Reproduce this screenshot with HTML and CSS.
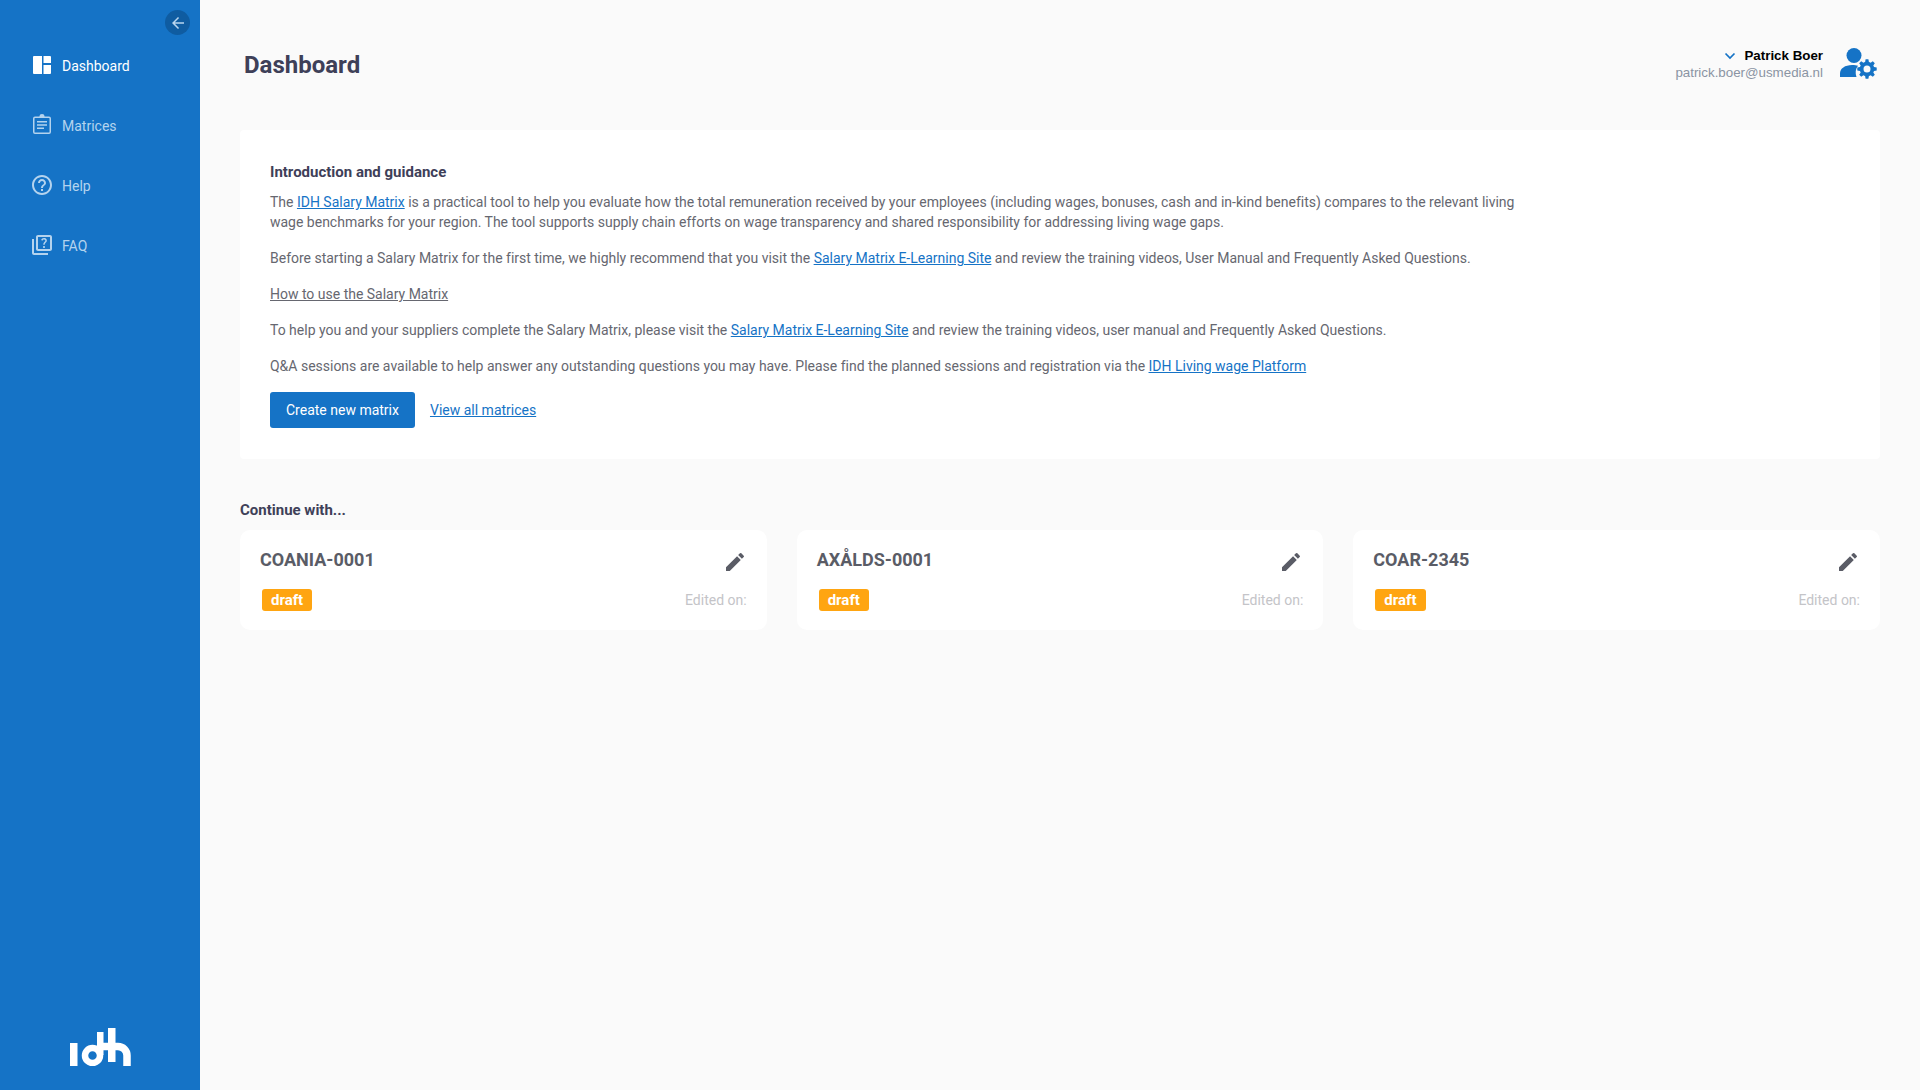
FILE: index.html
```html
<!DOCTYPE html>
<html lang="en">
<head>
<meta charset="utf-8">
<title>Dashboard</title>
<link rel="stylesheet" href="styles.css">
</head>
<body>
<div class="app">
  <aside class="sidebar">
    <button class="collapse" aria-label="Collapse">
      <svg width="18" height="18" viewBox="0 0 24 24"><path d="M20 11H7.830l5.590-5.590L12 4l-8 8 8 8 1.410-1.410L7.830 13H20v-2z" fill="currentColor"/></svg>
    </button>
    <nav class="nav">
      <a class="nav-item active">
        <svg class="nav-icon" viewBox="0 0 24 24"><path d="M4 3h8v18H4a1 1 0 0 1-1-1V4a1 1 0 0 1 1-1zM13.500 3H20a1 1 0 0 1 1 1v6h-7.500zM13.500 12H21v8a1 1 0 0 1-1 1h-6.500z" fill="currentColor"/></svg>
        <span>Dashboard</span>
      </a>
      <a class="nav-item">
        <svg class="nav-icon" viewBox="0 0 24 24"><path d="M9.500 3.500V3a2.500 2 0 0 1 5 0v.5H19a2 2 0 0 1 2 2V19a2 2 0 0 1-2 2H5a2 2 0 0 1-2-2V5.500a2 2 0 0 1 2-2zM5 5a.5.5 0 0 0-.5.500V19a.5.5 0 0 0 .5.500h14a.5.5 0 0 0 .5-.5V5.500A.5.5 0 0 0 19 5zM7 8h10v1.600H7zM7 11.200h10v1.600H7zM7 14.400h7V16H7z" fill="currentColor" fill-rule="evenodd"/></svg>
        <span>Matrices</span>
      </a>
      <a class="nav-item">
        <svg class="nav-icon" viewBox="0 0 24 24"><path d="M11 18h2v-2h-2v2zm1-16C6.480 2 2 6.480 2 12s4.480 10 10 10 10-4.480 10-10S17.520 2 12 2zm0 18c-4.410 0-8-3.590-8-8s3.590-8 8-8 8 3.590 8 8-3.590 8-8 8zm0-14c-2.210 0-4 1.790-4 4h2c0-1.100.9-2 2-2s2 .9 2 2c0 2-3 1.750-3 5h2c0-2.250 3-2.500 3-5 0-2.210-1.790-4-4-4z" fill="currentColor"/></svg>
        <span>Help</span>
      </a>
      <a class="nav-item">
        <svg class="nav-icon" viewBox="0 0 24 24"><path d="M4 6H2v14c0 1.100.9 2 2 2h14v-2H4V6zm16-4H8c-1.100 0-2 .9-2 2v12c0 1.100.9 2 2 2h12c1.100 0 2-.9 2-2V4c0-1.100-.9-2-2-2zm0 14H8V4h12v12zm-6.490-5.840c.41-.73 1.180-1.160 1.630-1.800.48-.68.21-1.940-1.140-1.940-.88 0-1.320.67-1.500 1.230l-1.370-.57C11.510 5.960 12.520 5 13.990 5c1.230 0 2.080.56 2.510 1.260.37.6.58 1.730.01 2.570-.63.93-1.230 1.210-1.560 1.810-.13.24-.18.4-.18 1.180h-1.520c.01-.41-.06-1.080.26-1.660zm-.56 3.790c0-.59.47-1.040 1.050-1.040.59 0 1.040.45 1.040 1.040 0 .58-.44 1.050-1.040 1.050-.58 0-1.050-.47-1.050-1.050z" fill="currentColor"/></svg>
        <span>FAQ</span>
      </a>
    </nav>
    <div class="logo">
      <svg width="61" height="38" viewBox="0 0 61 38"><path d="M0 15h7.500v23H0zM27 4h6.500v23H27zM38 0h7.500v34H38z" fill="#fff"/><circle cx="22.500" cy="27.500" r="7.500" fill="none" stroke="#fff" stroke-width="6.500"/><path d="M27 18.500h21a9 9 0 0 1 9 9V38" fill="none" stroke="#fff" stroke-width="7.500"/></svg>
    </div>
  </aside>
  <main class="main">
    <header class="topbar">
      <h1 class="title">Dashboard</h1>
      <div class="user">
        <div class="user-text">
          <div class="user-name">
            <svg width="12" height="8" viewBox="0 0 12 8"><path d="M1.500 1.500 6 6l4.500-4.500" fill="none" stroke="currentColor" stroke-width="1.700"/></svg>
            <span>Patrick Boer</span>
          </div>
          <div class="user-mail">patrick.boer@usmedia.nl</div>
        </div>
        <svg class="user-icon" width="38" height="32" viewBox="0 0 38 32"><circle cx="15" cy="7.500" r="7.500" fill="currentColor"/><path d="M1 29v-3.500c0-5 5-8.500 12-8.500 2.500 0 4.500.3 6 .8-2.500 3-3 7.500-1.500 11.200z" fill="currentColor"/><path transform="translate(.7 -1.500)" d="M37 23.900v-2.800l-2.700-.5a7 7 0 0 0-.7-1.700l1.500-2.200-2-2-2.200 1.500a7 7 0 0 0-1.700-.7l-.5-2.700h-2.800l-.5 2.700a7 7 0 0 0-1.700.7l-2.200-1.500-2 2 1.500 2.200a7 7 0 0 0-.7 1.700l-2.700.5v2.800l2.700.5a7 7 0 0 0 .7 1.700l-1.500 2.200 2 2 2.200-1.500a7 7 0 0 0 1.700.7l.5 2.700h2.800l.5-2.700a7 7 0 0 0 1.700-.7l2.200 1.500 2-2-1.500-2.200a7 7 0 0 0 .7-1.700zM27.300 26a3.500 3.500 0 1 1 0-7 3.500 3.500 0 0 1 0 7z" fill="currentColor"/></svg>
      </div>
    </header>
    <section class="intro">
      <h2 class="intro-title">Introduction and guidance</h2>
      <p class="intro-wrap">The <a class="link">IDH Salary Matrix</a> is a practical tool to help you evaluate how the total remuneration received by your employees (including wages, bonuses, cash and in-kind benefits) compares to the relevant living wage benchmarks for your region. The tool supports supply chain efforts on wage transparency and shared responsibility for addressing living wage gaps.</p>
      <p>Before starting a Salary Matrix for the first time, we highly recommend that you visit the <a class="link">Salary Matrix E-Learning Site</a> and review the training videos, User Manual and Frequently Asked Questions.</p>
      <p><a class="plain-link">How to use the Salary Matrix</a></p>
      <p>To help you and your suppliers complete the Salary Matrix, please visit the <a class="link">Salary Matrix E-Learning Site</a> and review the training videos, user manual and Frequently Asked Questions.</p>
      <p>Q&amp;A sessions are available to help answer any outstanding questions you may have. Please find the planned sessions and registration via the <a class="link">IDH Living wage Platform</a></p>
      <div class="actions">
        <a class="btn">Create new matrix</a>
        <a class="link">View all matrices</a>
      </div>
    </section>
    <h3 class="continue">Continue with...</h3>
    <section class="cards">
      <article class="card">
        <div class="card-row"><span class="card-name">COANIA-0001</span><svg class="pencil" width="24" height="24" viewBox="0 0 24 24"><path d="M3 17.250V21h3.750L17.810 9.940l-3.750-3.750L3 17.250zM20.710 7.040a1 1 0 0 0 0-1.410l-2.340-2.340a1 1 0 0 0-1.410 0l-1.830 1.830 3.750 3.750 1.830-1.830z" fill="currentColor"/></svg></div>
        <div class="card-foot"><span class="badge">draft</span><span class="edited">Edited on:</span></div>
      </article>
      <article class="card">
        <div class="card-row"><span class="card-name">AXÅLDS-0001</span><svg class="pencil" width="24" height="24" viewBox="0 0 24 24"><path d="M3 17.250V21h3.750L17.810 9.940l-3.750-3.750L3 17.250zM20.710 7.040a1 1 0 0 0 0-1.410l-2.340-2.340a1 1 0 0 0-1.410 0l-1.830 1.830 3.750 3.750 1.830-1.830z" fill="currentColor"/></svg></div>
        <div class="card-foot"><span class="badge">draft</span><span class="edited">Edited on:</span></div>
      </article>
      <article class="card">
        <div class="card-row"><span class="card-name">COAR-2345</span><svg class="pencil" width="24" height="24" viewBox="0 0 24 24"><path d="M3 17.250V21h3.750L17.810 9.940l-3.750-3.750L3 17.250zM20.710 7.040a1 1 0 0 0 0-1.410l-2.340-2.340a1 1 0 0 0-1.410 0l-1.830 1.830 3.750 3.750 1.830-1.830z" fill="currentColor"/></svg></div>
        <div class="card-foot"><span class="badge">draft</span><span class="edited">Edited on:</span></div>
      </article>
    </section>
  </main>
</div>
</body>
</html>
```
FILE: styles.css
```css
* { box-sizing: border-box; }
html, body { margin: 0; height: 100%; }
body { font-family: Roboto, sans-serif; font-size: 14px; line-height: 20px; color: #666770; background: #fafafa; overflow: hidden; }
.app { display: flex; height: 1090px; }
.sidebar { width: 200px; flex: none; background: #1573c6; display: flex; flex-direction: column; position: relative; padding-top: 36px; }
.collapse { position: absolute; top: 10px; left: 165px; width: 25px; height: 25px; border: 0; padding: 0; border-radius: 50%; background: #0f5ca1; color: #b9d5ee; display: flex; align-items: center; justify-content: center; }
.nav { display: flex; flex-direction: column; }
.nav-item { display: flex; align-items: center; gap: 8px; height: 60px; padding-left: 30px; color: #b4d3ee; }
.nav-item.active { color: #fff; }
.nav-icon { width: 24px; height: 24px; flex: none; margin-bottom: 2px; }
.logo { margin-top: auto; padding: 0 0 24px 70px; display: flex; line-height: 0; }
.main { flex: 1; min-width: 0; padding: 0 40px; }
.topbar { display: flex; justify-content: space-between; align-items: center; height: 130px; padding: 0 0 0 4px; }
.title { margin: 0; font-size: 24px; line-height: 30px; font-weight: 700; color: #3e4058; }
.user { display: flex; align-items: center; gap: 16px; color: #1573c6; padding-right: 3px; margin-bottom: 2px; }
.user-text { display: flex; flex-direction: column; align-items: flex-end; font-family: "Liberation Sans", sans-serif; font-size: 13.33px; line-height: 17px; }
.user-name { display: flex; align-items: center; gap: 8px; color: #000; font-weight: 700; }
.user-name svg { color: #1573c6; }
.user-mail { color: #8a94a3; }
.user-icon { flex: none; }
.intro { background: #fff; border-radius: 4px; padding: 30px; height: 329px; }
.intro-title { margin: 1px 0 9px; font-size: 15px; line-height: 22px; font-weight: 700; color: #3e4058; }
.intro p { margin: 0 0 16px; letter-spacing: -0.007px; }
.intro-wrap { max-width: 1250px; }
.link { color: #1573c6; text-decoration: underline; }
.plain-link { color: inherit; text-decoration: underline; }
.actions { display: flex; align-items: center; gap: 15px; }
.btn { background: #1573c6; color: #fff; border-radius: 3px; height: 36px; padding: 0 16px; display: flex; align-items: center; }
.continue { margin: 41px 0 10px; font-size: 15px; line-height: 20px; font-weight: 700; color: #3e4058; }
.cards { display: grid; grid-template-columns: repeat(3, 1fr); gap: 30px; }
.card { background: #fff; border-radius: 10px; height: 100px; padding: 20px 20px 19px; display: flex; flex-direction: column; justify-content: space-between; }
.card-row { display: flex; justify-content: space-between; align-items: flex-start; }
.card-name { font-size: 18px; line-height: 20px; font-weight: 700; color: #5a5c66; }
.pencil { color: #5a5c66; }
.card-foot { display: flex; justify-content: space-between; align-items: center; padding-left: 2px; }
.badge { background: #ffa511; color: #fff; font-size: 15px; font-weight: 700; line-height: 22px; height: 22px; border-radius: 3px; padding: 0 9px; }
.edited { color: #c4c4c8; }
```
